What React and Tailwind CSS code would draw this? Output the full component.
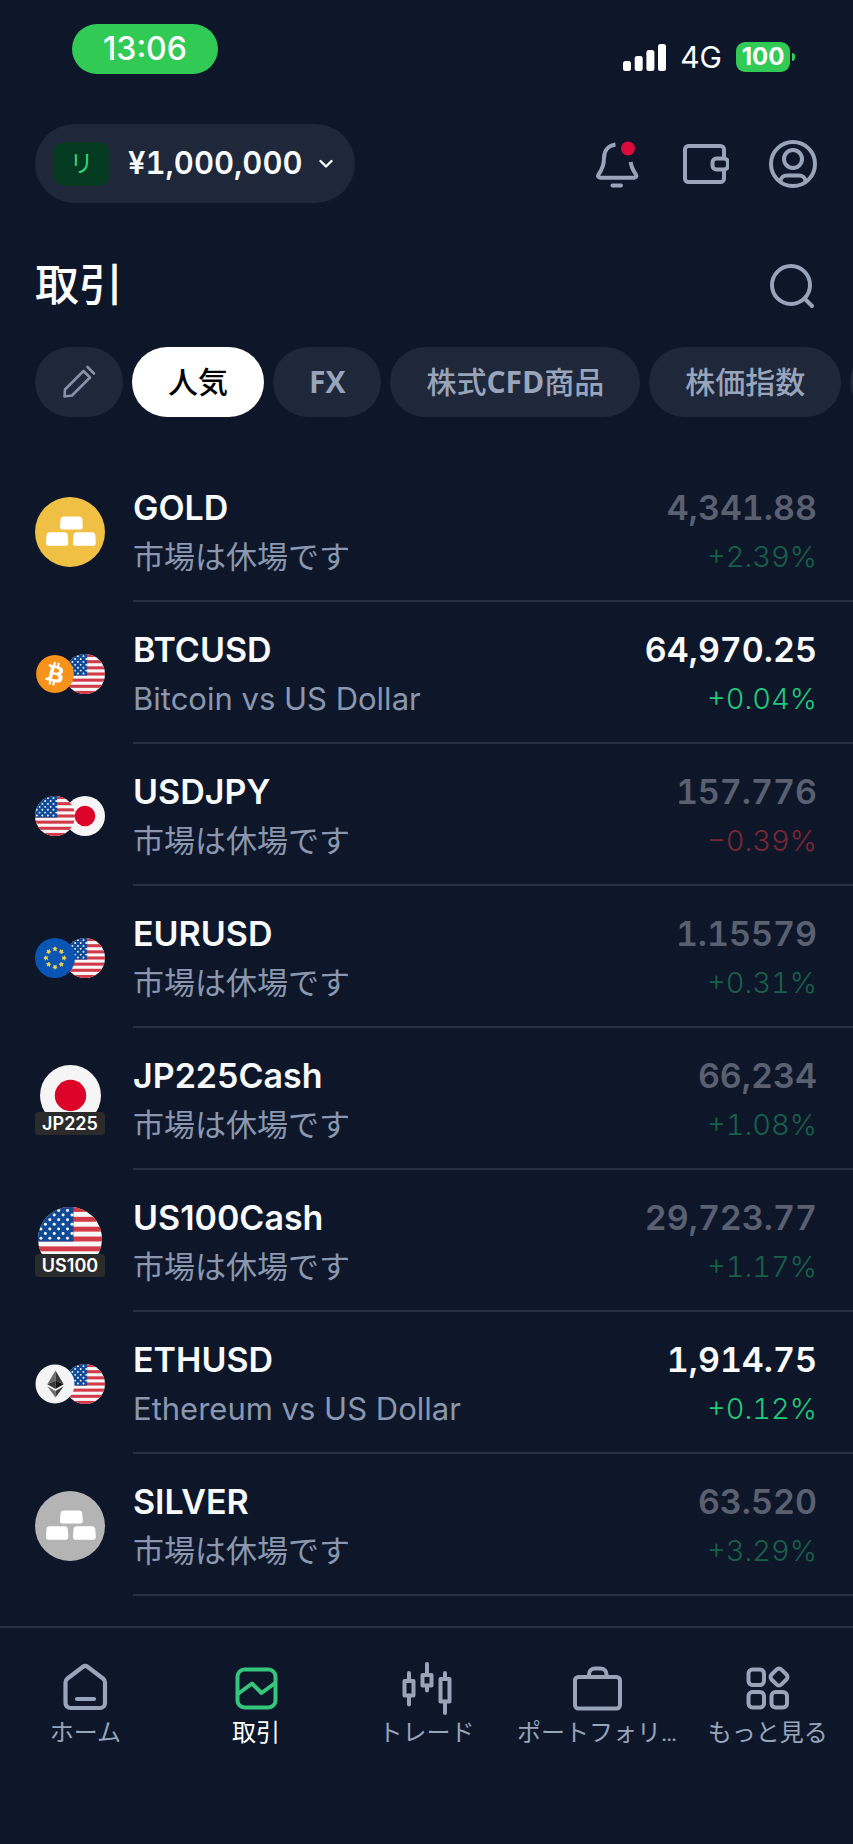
import React, { useId, useState } from "react";
import { FaBitcoin } from "react-icons/fa";

const stroke = {
  fill: "none",
  stroke: "currentColor",
  strokeWidth: 4,
  strokeLinecap: "round",
  strokeLinejoin: "round",
};

/* ---------- Header icons ---------- */

const BellIcon = () => (
  <svg width="48" height="48" viewBox="0 0 48 48" {...stroke}>
    <path d="M22.500 4.500C15 5.500 11 11 11 18c0 7-1.500 11-5.500 16.500-1 1.500-.2 3.200 1.600 3.200h34.200c1.800 0 2.600-1.700 1.600-3.200-3-4.500-4.700-7.500-5.200-12.500" strokeLinecap="butt" />
    <path d="M19.500 45.500H28" />
    <circle cx="35" cy="8.500" r="7" fill="#dc0a3c" stroke="none" />
  </svg>
);

const WalletIcon = () => (
  <svg width="48" height="48" viewBox="0 0 48 48" {...stroke}>
    <path d="M43 17.500V9.500a3.500 3.500 0 0 0-3.500-3.500H7.500A3.500 3.500 0 0 0 4 9.500v29A3.500 3.500 0 0 0 7.500 42h32a3.500 3.500 0 0 0 3.500-3.500V30" />
    <rect x="31.500" y="18.500" width="15.500" height="11" rx="4" />
  </svg>
);

const ProfileIcon = () => (
  <svg width="48" height="48" viewBox="0 0 48 48" {...stroke}>
    <circle cx="24" cy="24" r="22" />
    <circle cx="24" cy="19" r="9" />
    <path d="M11.500 41.500c0-3.800 3.200-6 6.500-6h12c3.300 0 6.500 2.200 6.500 6" />
  </svg>
);

const SearchIcon = () => (
  <svg width="48" height="48" viewBox="0 0 48 48" {...stroke}>
    <circle cx="22" cy="24" r="19" />
    <path d="M36 38l7 7" />
  </svg>
);

const PencilIcon = () => (
  <svg width="34" height="34" viewBox="0 0 34 34" {...stroke} strokeWidth={2.6}>
    <path d="M3 24.500L21.500 6l6.500 6.500L10 30.500l-7.500 1z" />
    <path d="M25.500 2l6.500 6.500" />
  </svg>
);

const ChevronIcon = () => (
  <svg width="14" height="10" viewBox="0 0 14 10" {...stroke} strokeWidth={2.4}>
    <path d="M1.500 2L7 7.500 12.500 2" />
  </svg>
);

/* ---------- Bottom nav icons ---------- */

const HomeIcon = () => (
  <svg width="54" height="54" viewBox="0 0 54 54" {...stroke} strokeWidth={4.2}>
    <path d="M7.500 21.500c0-1.700.7-3 2-4L25 5.800c1.500-1.100 3-1.100 4.500 0L45 17.500c1.300 1 2 2.300 2 4V42a5 5 0 0 1-5 5H12.500a5 5 0 0 1-5-5z" />
    <path d="M19 38h17" />
  </svg>
);

const ChartIcon = () => (
  <svg width="54" height="54" viewBox="0 0 54 54" {...stroke}>
    <rect x="8.500" y="8.500" width="38" height="38" rx="7" />
    <path d="M9.500 32.500l13.500-10 9.500 9.500 13-9.500" />
  </svg>
);

const CandlesIcon = () => (
  <svg width="54" height="54" viewBox="0 0 54 54" {...stroke}>
    <path d="M10 12v8M10 34.500v9M28 3v11M28 24.500v5M46 12v6M46 40.500v11.500" />
    <rect x="5.500" y="20" width="9" height="14.500" />
    <rect x="23.500" y="14" width="9" height="10.500" />
    <rect x="41.500" y="18" width="9" height="22.500" />
  </svg>
);

const BriefcaseIcon = () => (
  <svg width="54" height="54" viewBox="0 0 54 54" {...stroke}>
    <rect x="5" y="16" width="45" height="31.500" rx="3.500" />
    <path d="M19 15.500v-2c0-3.600 2.400-6 6-6h5.500c3.600 0 6 2.400 6 6v2" />
  </svg>
);

const MoreIcon = () => (
  <svg width="54" height="54" viewBox="0 0 54 54" {...stroke}>
    <rect x="7.500" y="8.500" width="15.500" height="15.500" rx="4" />
    <rect x="7.500" y="31" width="15.500" height="15.500" rx="4" />
    <rect x="30.500" y="31" width="15.500" height="15.500" rx="4" />
    <rect x="31" y="9" width="14" height="14" rx="3.500" transform="rotate(45 38 16)" />
  </svg>
);

/* ---------- Flags and coins ---------- */

const UsFlag = ({ size = 40 }) => {
  const id = useId();
  const rows = [0, 1, 2, 3, 4, 5, 6];
  return (
    <svg width={size} height={size} viewBox="0 0 65 65">
      <clipPath id={id}>
        <circle cx="32.500" cy="32.500" r="32.500" />
      </clipPath>
      <g clipPath={`url(#${id})`}>
        <rect width="65" height="65" fill="#f8f8fa" />
        {rows.map((r) => (
          <rect key={r} y={r * 10} width="65" height="5" fill="#d23a48" />
        ))}
        <rect width="36" height="35" fill="#0f4a96" />
        {rows.map((r) =>
          [0, 1, 2, 3].map((c) => (
            <circle
              key={`${r}-${c}`}
              cx={3 + c * 9 + (r % 2) * 4.5}
              cy={3.5 + r * 4.7}
              r="1.500"
              fill="#fff"
            />
          ))
        )}
      </g>
    </svg>
  );
};

const JpFlag = ({ size = 40 }) => (
  <svg width={size} height={size} viewBox="0 0 40 40">
    <circle cx="20" cy="20" r="20" fill="#f5f5f6" />
    <circle cx="20" cy="20" r="10.300" fill="#dc0228" />
  </svg>
);

const EuFlag = () => (
  <svg width="40" height="40" viewBox="0 0 40 40">
    <circle cx="20" cy="20" r="20" fill="#0a55b4" />
    {[0, 45, 90, 135, 180, 225, 270, 315].map((a) => (
      <path
        key={a}
        d="M20 8.700l.7 1.300 1.500.2-1.100 1.100.3 1.500-1.400-.7-1.400.7.3-1.500-1.100-1.100 1.500-.2z"
        fill="#f7d648"
        stroke="#f7d648"
        strokeWidth=".6"
        transform={`rotate(${a} 20 20)`}
      />
    ))}
  </svg>
);

const BtcCoin = () => (
  <svg width="40" height="40" viewBox="0 0 40 40">
    <circle cx="20" cy="20" r="15" fill="#fff" />
    <FaBitcoin x="0.500" y="0.500" size={39} color="#f7931a" />
  </svg>
);

const EthCoin = () => (
  <svg width="40" height="40" viewBox="0 0 40 40">
    <circle cx="20" cy="20" r="19.500" fill="#f4f4f5" />
    <path d="M20.500 6.500l-8.200 13.700 8.200-3.700z" fill="#6b6b6b" />
    <path d="M20.500 6.500l8.200 13.700-8.200-3.700z" fill="#3a3a3a" />
    <path d="M12.300 20.200l8.200-3.700V25z" fill="#3a3a3a" />
    <path d="M28.700 20.200l-8.200-3.700V25z" fill="#151515" />
    <path d="M12.300 22.300l8.200 4.700v6.500z" fill="#6b6b6b" />
    <path d="M28.700 22.300L20.500 27v6.500z" fill="#3a3a3a" />
  </svg>
);

const Bars = ({ color }) => (
  <svg width="70" height="70" viewBox="0 0 70 70">
    <circle cx="35" cy="35" r="35" fill={color} />
    <g fill="#fff">
      <path d="M29 19.500h15q3 0 3.300 3l.5 7q.2 3-2.500 3H27.500q-2.700 0-2.500-3l.5-7q.3-3 3.500-3z" />
      <path d="M14.500 35.200h15q3 0 3.300 3l.5 7.500q.2 3-2.500 3H13.500q-2.700 0-2.500-3l.5-7.500q.3-3 3-3z" />
      <path d="M42 35.200h15q3 0 3.300 3l.5 7.500q.2 3-2.500 3H40.500q-2.700 0-2.500-3l.5-7.500q.3-3 3.500-3z" />
    </g>
  </svg>
);

const Pair = ({ front, back }) => (
  <div className="flex w-[70px] items-center">
    <div className="z-10 shrink-0">{front}</div>
    <div className="-ml-2.5 shrink-0">{back}</div>
  </div>
);

const IndexBadge = ({ flag, label }) => (
  <div className="relative flex h-[70px] w-[70px] justify-center">
    {flag}
    <span className="absolute inset-x-0 bottom-0 rounded-sm bg-[#2b2b2b] text-center text-lg leading-[23px] font-semibold text-white">
      {label}
    </span>
  </div>
);

/* ---------- Data ---------- */

const CLOSED = "市場は休場です";

const instruments = [
  { symbol: "GOLD", price: "4,341.88", change: "+2.39%", icon: <Bars color="#f0c044" /> },
  {
    symbol: "BTCUSD",
    name: "Bitcoin vs US Dollar",
    price: "64,970.25",
    change: "+0.04%",
    icon: <Pair front={<BtcCoin />} back={<UsFlag />} />,
  },
  {
    symbol: "USDJPY",
    price: "157.776",
    change: "−0.39%",
    icon: <Pair front={<UsFlag />} back={<JpFlag />} />,
  },
  {
    symbol: "EURUSD",
    price: "1.15579",
    change: "+0.31%",
    icon: <Pair front={<EuFlag />} back={<UsFlag />} />,
  },
  {
    symbol: "JP225Cash",
    price: "66,234",
    change: "+1.08%",
    icon: <IndexBadge flag={<JpFlag size={61} />} label="JP225" />,
  },
  {
    symbol: "US100Cash",
    price: "29,723.77",
    change: "+1.17%",
    icon: <IndexBadge flag={<UsFlag size={64} />} label="US100" />,
  },
  {
    symbol: "ETHUSD",
    name: "Ethereum vs US Dollar",
    price: "1,914.75",
    change: "+0.12%",
    icon: <Pair front={<EthCoin />} back={<UsFlag />} />,
  },
  { symbol: "SILVER", price: "63.520", change: "+3.29%", icon: <Bars color="#b4b4b4" /> },
];

const categories = ["人気", "FX", "株式CFD商品", "株価指数"];

const navItems = [
  { label: "ホーム", icon: <HomeIcon /> },
  { label: "取引", icon: <ChartIcon /> },
  { label: "トレード", icon: <CandlesIcon /> },
  { label: "ポートフォリ…", icon: <BriefcaseIcon /> },
  { label: "もっと見る", icon: <MoreIcon /> },
];

const changeColor = (item) => {
  const down = item.change.startsWith("−");
  if (item.name) return down ? "text-[#e5344a]" : "text-[#22c97a]";
  return down ? "text-[#7a2734]" : "text-[#186049]";
};

/* ---------- Sections ---------- */

const StatusBar = () => (
  <div className="flex h-[124px] items-start justify-between pt-6 pr-[58px] pl-[72px]">
    <div className="flex h-[50px] w-[146px] items-center justify-center rounded-full bg-[#30ca55] text-[32px] font-medium text-white">
      13:06
    </div>
    <div className="flex h-[66px] items-center text-white">
      <svg width="43" height="27" viewBox="0 0 43 27" fill="currentColor">
        <rect y="17" width="8" height="10" rx="2.500" />
        <rect x="11.700" y="12" width="8" height="15" rx="2.500" />
        <rect x="23.400" y="6" width="8" height="21" rx="2.500" />
        <rect x="35" width="8" height="27" rx="2.500" />
      </svg>
      <span className="ml-3.5 text-[30px]">4G</span>
      <span className="ml-3.5 flex h-[30px] w-[54px] items-center justify-center rounded-[9px] bg-[#30ca55] text-2xl font-bold">
        100
      </span>
      <span className="ml-0.5 h-2 w-[3px] rounded-r-full bg-[#30ca55]" />
    </div>
  </div>
);

// Latin runs are set heavier than the Japanese around them
const CategoryLabel = ({ text }) =>
  text.split(/([A-Z]+)/).map((part, i) =>
    i % 2 ? (
      <span key={i} className="font-bold">
        {part}
      </span>
    ) : (
      part
    )
  );

const InstrumentRow = ({ item }) => (
  <li className="flex pl-[35px]">
    <div className="mr-7 flex w-[70px] shrink-0 items-center pt-0.5">{item.icon}</div>
    <div className="flex h-[142px] min-w-0 flex-1 justify-between border-b-2 border-[#253045] pt-6 pr-9">
      <div className="flex min-w-0 flex-col gap-px">
        <span className="text-[34px] leading-[48px] font-semibold text-[#f8fafc]">{item.symbol}</span>
        <span className="truncate text-[31px] leading-[48px] font-normal text-[#8a97ae]">
          {item.name || CLOSED}
        </span>
      </div>
      <div className="flex flex-col items-end gap-px tabular-nums">
        <span
          className={`text-[34px] leading-[48px] font-semibold ${
            item.name ? "text-[#f8fafc]" : "text-[#5b6070]"
          }`}
        >
          {item.price}
        </span>
        <span className={`text-[29px] leading-[48px] font-light ${changeColor(item)}`}>{item.change}</span>
      </div>
    </div>
  </li>
);

const App = () => {
  const [category, setCategory] = useState("人気");
  const [page, setPage] = useState("取引");

  return (
    <div className="flex min-h-screen flex-col overflow-x-hidden bg-[#0e172a] font-['Inter','Noto_Sans_CJK_JP',sans-serif]">
      <StatusBar />

      {/* Account */}
      <header className="flex items-center justify-between pr-9 pl-[35px]">
        <button className="flex h-[79px] items-center rounded-full bg-[#1f273a] pr-[22px] pl-[18px]">
          <span className="flex h-11 w-[57px] items-center justify-center rounded-xl bg-[#043a20] text-2xl text-[#34d17c]">
            リ
          </span>
          <span className="mr-4 ml-[18px] text-[31px] font-semibold text-[#f8fafc] tabular-nums">¥1,000,000</span>
          <span className="text-[#f8fafc]">
            <ChevronIcon />
          </span>
        </button>
        <div className="flex gap-10 text-[#98a4ba]">
          <button aria-label="通知">
            <BellIcon />
          </button>
          <button aria-label="ウォレット">
            <WalletIcon />
          </button>
          <button aria-label="プロフィール">
            <ProfileIcon />
          </button>
        </div>
      </header>

      <main className="flex-1">
        {/* Title */}
        <div className="mt-[54px] flex items-center justify-between pr-9 pl-[35px]">
          <h1 className="text-[44px] leading-[56px] font-medium text-white">取引</h1>
          <button aria-label="検索" className="text-[#98a4ba]">
            <SearchIcon />
          </button>
        </div>

        {/* Categories */}
        <div className="mt-[34px] flex gap-[9px] overflow-hidden pl-[35px] font-['Open_Sans','Noto_Sans_CJK_JP',sans-serif]">
          <button
            aria-label="編集"
            className="flex h-[70px] w-[88px] shrink-0 items-center justify-center rounded-full bg-[#1f273a] text-[#8592aa]"
          >
            <PencilIcon />
          </button>
          {categories.map((name) => (
            <button
              key={name}
              onClick={() => setCategory(name)}
              className={`h-[70px] shrink-0 rounded-full px-9 text-3xl font-medium ${
                category === name ? "bg-white text-black" : "bg-[#1f273a] text-[#98a4ba]"
              }`}
            >
              <CategoryLabel text={name} />
            </button>
          ))}
          <span className="h-[70px] w-[88px] shrink-0 rounded-full bg-[#1f273a]" />
        </div>

        {/* Instruments */}
        <ul className="mt-[43px]">
          {instruments.map((item) => (
            <InstrumentRow key={item.symbol} item={item} />
          ))}
        </ul>
      </main>

      {/* Bottom nav */}
      <nav className="mt-[30px] grid grid-cols-5 border-t-2 border-[#253045] pt-[33px] pb-[93px] font-['Roboto','Noto_Sans_CJK_JP',sans-serif]">
        {navItems.map(({ label, icon }) => (
          <button
            key={label}
            onClick={() => setPage(label)}
            className={`flex flex-col items-center text-2xl leading-9 whitespace-nowrap ${
              page === label ? "text-white" : "text-[#98a4ba]"
            }`}
          >
            <span className={page === label ? "text-[#34c77b]" : ""}>{icon}</span>
            {label}
          </button>
        ))}
      </nav>
    </div>
  );
};

export default App;
